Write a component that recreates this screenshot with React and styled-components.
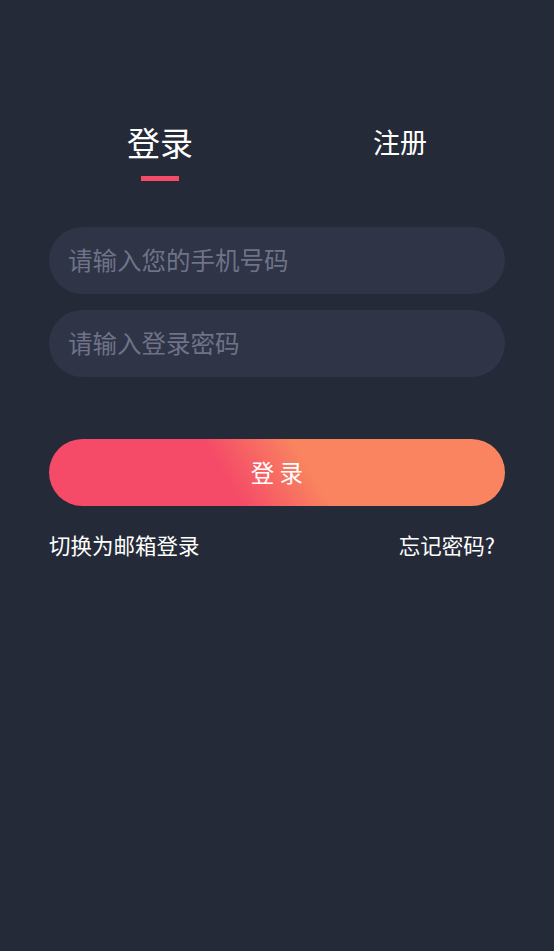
import React, { useState } from 'react'
import styled, { createGlobalStyle } from 'styled-components'

const GlobalStyle = createGlobalStyle`
  html, body {
    margin: 0;
    padding: 0;
    background: #252a38;
  }
  * {
    box-sizing: border-box;
  }
`

function App() {
  const [tab, setTab] = useState('login')

  return (
    <Page>
      <GlobalStyle />
      <Tabs>
        <Tab active={tab === 'login'} onClick={() => setTab('login')}>
          <TabLabel active={tab === 'login'}>登录</TabLabel>
          <Underline active={tab === 'login'} />
        </Tab>
        <Tab active={tab === 'register'} onClick={() => setTab('register')}>
          <TabLabel active={tab === 'register'}>注册</TabLabel>
          <Underline active={tab === 'register'} />
        </Tab>
      </Tabs>

      <Form>
        <Field type="tel" placeholder="请输入您的手机号码" />
        <Field type="password" placeholder="请输入登录密码" />
        <SubmitButton type="button">登 录</SubmitButton>
        <Links>
          <LinkText>切换为邮箱登录</LinkText>
          <LinkText>忘记密码?</LinkText>
        </Links>
      </Form>
    </Page>
  )
}

const Page = styled.div`
  min-height: 100vh;
  background: #252a38;
  padding-top: 115px;
  font-family: "Noto Sans CJK SC", "Noto Sans", sans-serif;
  color: #ffffff;
`

const Tabs = styled.div`
  display: flex;
  justify-content: center;
  padding-left: 6px;
`

const Tab = styled.div`
  width: 240px;
  display: flex;
  flex-direction: column;
  align-items: center;
  cursor: pointer;
`

const TabLabel = styled.span`
  font-size: ${p => (p.active ? '33px' : '27px')};
  line-height: 54px;
  height: 54px;
  color: #ffffff;
`

const Underline = styled.div`
  width: 38px;
  height: 5px;
  margin-top: 7px;
  background: ${p => (p.active ? '#f54a68' : 'transparent')};
`

const Form = styled.div`
  margin: 46px 49px 0;
  display: flex;
  flex-direction: column;
  gap: 16px;
`

const Field = styled.input`
  height: 67px;
  width: 100%;
  border: 0;
  outline: 0;
  border-radius: 34px;
  background: #2f3446;
  padding: 0 20px 3px 19px;
  font-family: "Noto Sans CJK SC", "Noto Sans", sans-serif;
  font-size: 24.5px;
  color: #ffffff;

  &::placeholder {
    color: #6e7389;
  }
`

const SubmitButton = styled.button`
  margin-top: 46px;
  height: 67px;
  width: 100%;
  border: 0;
  outline: 0;
  border-radius: 34px;
  background: linear-gradient(59deg, #f54a68 39%, #f9845f 57%);
  font-family: "Noto Sans CJK SC", "Noto Sans", sans-serif;
  font-size: 23.5px;
  padding-bottom: 2px;
  color: #ffffff;
  cursor: pointer;
`

const Links = styled.div`
  display: flex;
  justify-content: space-between;
  padding: 0 10px 0 0;
  margin-top: 6px;
`

const LinkText = styled.span`
  font-size: 21.5px;
  line-height: 34px;
  color: #ffffff;
  cursor: pointer;
`

export default App
